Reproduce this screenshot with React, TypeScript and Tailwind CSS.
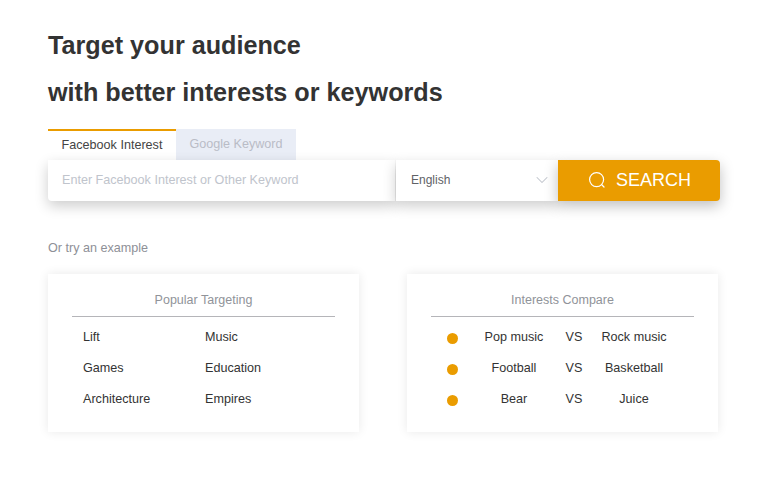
import { ChevronDown } from 'lucide-react';

const POPULAR = [
  ['Lift', 'Music'],
  ['Games', 'Education'],
  ['Architecture', 'Empires'],
];

const COMPARE = [
  ['Pop music', 'Rock music'],
  ['Football', 'Basketball'],
  ['Bear', 'Juice'],
];

export default function App() {
  return (
    <div className="h-[504px] w-[760px] overflow-hidden bg-white pl-12 pt-[22px] font-['Liberation_Sans',sans-serif] text-[#333]">
      <h1 className="text-[25.2px] font-bold leading-[47px] text-[#333]">
        Target your audience
        <br />
        with better interests or keywords
      </h1>

      <div className="mt-[13px] flex h-[31px] w-[248px] text-[12.6px] leading-[30px]">
        <div className="w-32 border-t-2 border-[#ea9c00] text-center leading-[28px] text-[#444]">Facebook Interest</div>
        <div className="w-[120px] bg-[#e9edf6] text-center text-[#b9bcc6]">Google Keyword</div>
      </div>

      <div className="flex h-[41px] w-[672px]">
        <div className="flex w-[347px] items-center rounded-bl-[4px] bg-white pl-[14px] text-[12.6px] text-[#c0c4cc] shadow-[0_5px_14px_rgba(0,0,0,0.2)]">
          Enter Facebook Interest or Other Keyword
        </div>
        <div className="ml-px flex w-[162px] items-center justify-between bg-white pb-px pl-[15px] pr-1.5 text-xs text-[#606266] shadow-[0_5px_14px_rgba(0,0,0,0.2)]">
          English
          <ChevronDown size={20} strokeWidth={1.25} className="text-[#c0c4cc]" />
        </div>
        <div className="flex w-[162px] items-center justify-center gap-[11px] rounded-r-[4px] bg-[#ea9c00] pb-px pl-0.5 text-lg text-white shadow-[0_5px_14px_rgba(0,0,0,0.25)]">
          <svg width="16" height="16" viewBox="0 0 16 16" fill="none" stroke="currentColor" strokeWidth="1.2" strokeLinecap="round">
            <circle cx="7.6" cy="7.6" r="7" />
            <path d="M13 13l2 2" />
          </svg>
          SEARCH
        </div>
      </div>

      <p className="mt-10 text-[12.6px] leading-[15px] text-[#8e9097]">Or try an example</p>

      <div className="mt-[18px] flex gap-12">
        <div className="h-[158px] w-[311px] px-6 pt-[19px] shadow-[0_0_10px_rgba(0,0,0,0.09)]">
          <div className="h-6 border-b border-[#b5b5b9] text-center text-[12.5px] leading-[15px] text-[#909399]">Popular Targeting</div>
          <div className="mt-[5px]">
            {POPULAR.map((row) => (
              <div key={row[0]} className="flex h-[31px] items-center pl-[11px] text-[12.6px] text-[#333]">
                <span className="w-[122px]">{row[0]}</span>
                <span>{row[1]}</span>
              </div>
            ))}
          </div>
        </div>

        <div className="h-[158px] w-[311px] px-6 pt-[19px] shadow-[0_0_10px_rgba(0,0,0,0.09)]">
          <div className="h-6 border-b border-[#b5b5b9] text-center text-[12.5px] leading-[15px] text-[#909399]">Interests Compare</div>
          <div className="mt-[5px]">
            {COMPARE.map((row) => (
              <div key={row[0]} className="flex h-[31px] items-center pl-4 text-[12.6px] text-[#333]">
                <span className="mt-px h-[11px] w-[11px] rounded-full bg-[#ea9c00]" />
                <span className="ml-[11px] w-[90px] text-center">{row[0]}</span>
                <span className="w-[30px] text-center">VS</span>
                <span className="w-[90px] text-center">{row[1]}</span>
              </div>
            ))}
          </div>
        </div>
      </div>
    </div>
  );
}
